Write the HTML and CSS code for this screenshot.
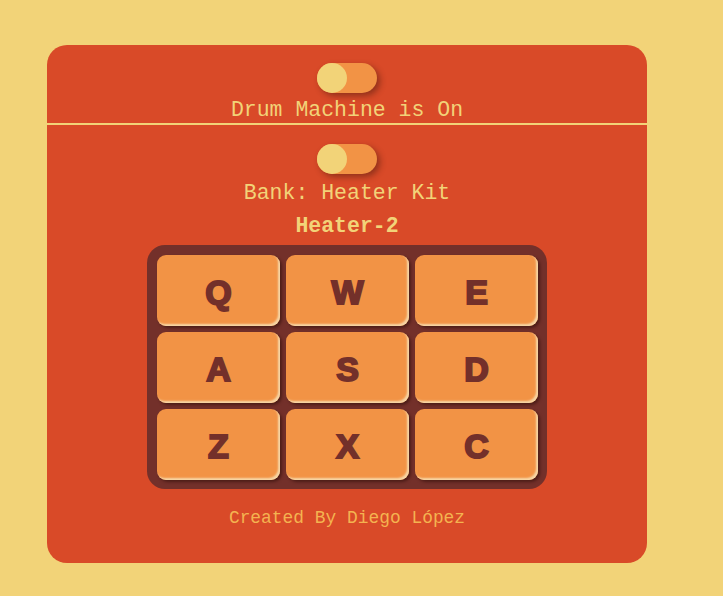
FILE: index.html
```html
<!DOCTYPE html>
<html lang="en">
<head>
<meta charset="utf-8">
<title>Drum Machine</title>
<link rel="stylesheet" href="styles.css">
</head>
<body>
<div class="machine">
  <section class="power">
    <div class="toggle"><span class="knob"></span></div>
    <p class="label">Drum Machine is On</p>
  </section>
  <section class="controls">
    <div class="toggle"><span class="knob"></span></div>
    <p class="label bank">Bank: Heater Kit</p>
    <p class="display">Heater-2</p>
    <div class="pads">
      <button class="pad">Q</button>
      <button class="pad">W</button>
      <button class="pad">E</button>
      <button class="pad">A</button>
      <button class="pad">S</button>
      <button class="pad">D</button>
      <button class="pad">Z</button>
      <button class="pad">X</button>
      <button class="pad">C</button>
    </div>
    <p class="footer">Created By Diego López</p>
  </section>
</div>
</body>
</html>
```
FILE: styles.css
```css
html, body {
  margin: 0;
  padding: 0;
}
body {
  background: #f2d378;
  width: 723px;
  height: 596px;
  padding: 45px 0 0 47px;
  box-sizing: border-box;
  font-family: "Courier New", "Liberation Mono", monospace;
}
.machine {
  width: 600px;
  height: 518px;
  background: #d94a28;
  border-radius: 20px;
  box-sizing: border-box;
}
.power {
  padding-top: 18px;
  display: flex;
  flex-direction: column;
  align-items: center;
  border-bottom: 2px solid #f2d378;
}
.toggle {
  width: 60px;
  height: 30px;
  border-radius: 15px;
  background: #f29345;
  box-shadow: 3px 3px 6px rgba(60, 20, 10, 0.45);
  display: flex;
}
.knob {
  width: 30px;
  height: 30px;
  border-radius: 50%;
  background: #f2d378;
}
.label {
  margin: 5px 0 0;
  font-size: 21.5px;
  line-height: 25px;
  color: #f2d378;
}
.controls {
  padding-top: 19px;
  display: flex;
  flex-direction: column;
  align-items: center;
}
.bank {
  margin-top: 6px;
  line-height: 26px;
}
.display {
  margin: 7px 0 0;
  font-size: 21.5px;
  line-height: 26px;
  font-weight: bold;
  color: #f2d378;
}
.pads {
  margin-top: 6px;
  width: 400px;
  height: 244px;
  box-sizing: border-box;
  padding: 10px 9px 9px 10px;
  background: #73302a;
  border-radius: 18px;
  display: grid;
  grid-template-columns: repeat(3, 123px);
  grid-template-rows: repeat(3, 71px);
  gap: 6px;
}
.pad {
  border: none;
  padding: 2px 0 0;
  margin: 0;
  background: #f29345;
  border-radius: 9px;
  font-family: "Liberation Sans", Arial, sans-serif;
  font-weight: 900;
  font-size: 34px;
  line-height: 1;
  color: #73302a;
  box-shadow: inset -2px -2px 2px #f6d6a6, 2px 2px 3px rgba(40, 10, 5, 0.5);
  -webkit-text-stroke: 2px #73302a;
}
.footer {
  margin: 18px 0 0;
  font-size: 17.9px;
  line-height: 22px;
  color: #f4b350;
}
```
